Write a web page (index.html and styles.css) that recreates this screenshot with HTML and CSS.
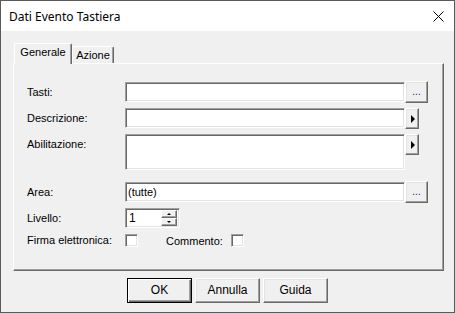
FILE: index.html
```html
<!DOCTYPE html>
<html lang="it">
<head>
    <meta charset="UTF-8">
    <title>Dati Evento Tastiera</title>
    <link rel="stylesheet" href="styles.css">
</head>
<body>

    <div class="window">
        <!-- Title bar -->
        <div class="titlebar">
            <span class="title">Dati Evento Tastiera</span>
            <svg class="close" width="11" height="11" viewBox="0 0 11 11">
                <path d="M0.5 0.5 L10.5 10.5 M10.5 0.5 L0.5 10.5" stroke="#000" stroke-width="1" fill="none"/>
            </svg>
        </div>

        <div class="body">
            <!-- Tabs -->
            <div class="tabs">
                <div class="tab tab-active">Generale</div>
                <div class="tab">Azione</div>
            </div>

            <!-- Tab page -->
            <div class="panel">
                <div class="row">
                    <label class="label">Tasti:</label>
                    <div class="field"></div>
                    <div class="btn btn-dots">...</div>
                </div>
                <div class="row">
                    <label class="label">Descrizione:</label>
                    <div class="field"></div>
                    <div class="btn btn-arrow"><span class="arrow"></span></div>
                </div>
                <div class="row row-tall">
                    <label class="label">Abilitazione:</label>
                    <div class="field field-tall"></div>
                    <div class="btn btn-arrow"><span class="arrow"></span></div>
                </div>
                <div class="row">
                    <label class="label">Area:</label>
                    <div class="field">(tutte)</div>
                    <div class="btn btn-dots">...</div>
                </div>
                <div class="row">
                    <label class="label">Livello:</label>
                    <div class="field field-spin">
                        <span class="spin-value">1</span>
                        <div class="spin-buttons">
                            <div class="spin-btn"><span class="tri-up"></span></div>
                            <div class="spin-btn"><span class="tri-down"></span></div>
                        </div>
                    </div>
                </div>
                <div class="row row-check">
                    <label class="label">Firma elettronica:</label>
                    <div class="checkbox"></div>
                    <label class="label-comment">Commento:</label>
                    <div class="checkbox"></div>
                </div>
            </div>
        </div>

        <!-- Dialog buttons -->
        <div class="footer">
            <div class="button button-default">OK</div>
            <div class="button">Annulla</div>
            <div class="button">Guida</div>
        </div>
    </div>

</body>
</html>
```

FILE: styles.css
```css
* {
    box-sizing: border-box;
}
body {
    margin: 0;
    font-family: "Liberation Sans", Arial, sans-serif;
    font-size: 11px;
    color: #000;
    background-color: #f0f0f0;
}
.window {
    width: 455px;
    height: 313px;
    border: 1px solid #5a5a5a;
    background-color: #f0f0f0;
    display: flex;
    flex-direction: column;
}
/* Title bar */
.titlebar {
    height: 30px;
    background-color: #fff;
    display: flex;
    align-items: center;
    justify-content: space-between;
    padding: 0 10px 0 8px;
}
.title {
    font-family: "Noto Sans", sans-serif;
    font-size: 12px;
}
.close {
    display: block;
}
.body {
    padding: 12px 10px 0 12px;
}
/* Tabs */
.tabs {
    display: flex;
    align-items: flex-end;
    height: 20px;
    padding-left: 1px;
    position: relative;
    z-index: 1;
}
.tab {
    height: 17px;
    width: 42px;
    border: 1px solid;
    border-color: #fff #696969 transparent #fff;
    border-bottom: none;
    box-shadow: inset -1px 0 0 #a0a0a0;
    border-radius: 2px 2px 0 0;
    text-align: center;
    line-height: 16px;
    background-color: #f0f0f0;
}
.tab-active {
    width: 58px;
    height: 21px;
    margin-bottom: -1px;
    line-height: 17px;
}
/* Tab page */
.panel {
    height: 208px;
    border: 1px solid;
    border-color: #fff #696969 #696969 #fff;
    box-shadow: inset -1px -1px 0 #a0a0a0;
    padding: 18px 0 0 13px;
}
.row {
    display: flex;
    align-items: flex-start;
    height: 20px;
    margin-bottom: 6px;
}
.row-tall {
    height: 36px;
    margin-bottom: 12px;
}
.label {
    width: 98px;
    line-height: 20px;
    white-space: nowrap;
}
.field {
    width: 280px;
    height: 20px;
    background-color: #fff;
    border: 1px solid;
    border-color: #a0a0a0 #fff #fff #a0a0a0;
    box-shadow: inset 1px 1px 0 #696969, inset -1px -1px 0 #e3e3e3;
    padding: 0 2px;
    line-height: 18px;
}
.field-tall {
    height: 36px;
}
.btn {
    height: 21px;
    margin-top: -1px;
    background-color: #f0f0f0;
    border: 1px solid;
    border-color: #fff #696969 #696969 #fff;
    box-shadow: inset -1px -1px 0 #a0a0a0, inset 1px 1px 0 #e3e3e3;
    display: flex;
    align-items: center;
    justify-content: center;
}
.btn-dots {
    width: 23px;
    margin-top: -1px;
    height: 22px;
    color: #5a0070;
    font-size: 10px;
    align-items: flex-end;
    padding-bottom: 5px;
}
.btn-arrow {
    width: 14px;
    margin-top: 0;
}
.arrow {
    width: 0;
    height: 0;
    border-left: 4px solid #000;
    border-top: 4px solid transparent;
    border-bottom: 4px solid transparent;
    margin-left: 1px;
}
/* Spinner */
.field-spin {
    width: 55px;
    display: flex;
    padding: 0 2px 0 3px;
    line-height: 18px;
    font-size: 12px;
}
.spin-value {
    flex-grow: 1;
}
.spin-buttons {
    width: 16px;
    display: flex;
    flex-direction: column;
    padding-top: 1px;
}
.spin-btn {
    height: 8px;
    background-color: #f0f0f0;
    border: 1px solid;
    border-color: #fff #696969 #696969 #fff;
    box-shadow: inset -1px -1px 0 #a0a0a0;
    display: flex;
    align-items: center;
    justify-content: center;
}
.tri-up, .tri-down {
    width: 0;
    height: 0;
    border-left: 2px solid transparent;
    border-right: 2px solid transparent;
}
.tri-up {
    border-bottom: 2px solid #000;
}
.tri-down {
    border-top: 2px solid #000;
}
/* Checkboxes */
.row-check {
    height: 13px;
    align-items: center;
}
.row-check .label {
    line-height: 13px;
}
.checkbox {
    width: 13px;
    height: 13px;
    background-color: #fff;
    border: 1px solid;
    border-color: #a0a0a0 #fff #fff #a0a0a0;
    box-shadow: inset 1px 1px 0 #696969, inset -1px -1px 0 #e3e3e3;
}
.label-comment {
    width: 65px;
    margin-left: 28px;
    line-height: 13px;
    padding-top: 2px;
}
/* Dialog buttons */
.footer {
    display: flex;
    justify-content: center;
    gap: 3px;
    margin-top: 7px;
}
.button {
    width: 65px;
    height: 25px;
    background-color: #f0f0f0;
    border: 1px solid;
    border-color: #fff #696969 #696969 #fff;
    box-shadow: inset -1px -1px 0 #a0a0a0, inset 1px 1px 0 #e3e3e3;
    text-align: center;
    line-height: 23px;
    font-size: 12px;
}
.button-default {
    border-color: #000;
    box-shadow: inset 1px 1px 0 #fff, inset -1px -1px 0 #696969, inset -2px -2px 0 #a0a0a0;
}
```
